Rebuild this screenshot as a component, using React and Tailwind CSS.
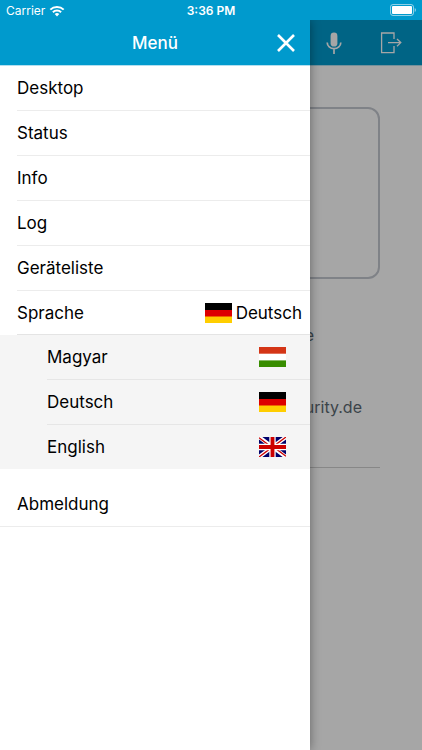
import React, { useState } from 'react';

const menuItems = ['Desktop', 'Status', 'Info', 'Log', 'Geräteliste'];

const GermanFlag = () => (
  <svg className="w-[27px] h-5" viewBox="0 0 28 20" preserveAspectRatio="none" aria-hidden="true">
    <path d="M0 0h28v7H0z" fill="#000" />
    <path d="M0 7h28v7H0z" fill="#dd0000" />
    <path d="M0 13.5h28V20H0z" fill="#ffce00" />
  </svg>
);

const HungarianFlag = () => (
  <svg className="w-[27px] h-5" viewBox="0 0 28 20" preserveAspectRatio="none" aria-hidden="true">
    <path d="M0 0h28v20H0z" fill="#fff" />
    <path d="M0 0h28v6.7H0z" fill="#d43516" />
    <path d="M0 13.4h28V20H0z" fill="#388d00" />
  </svg>
);

const BritishFlag = () => (
  <svg className="w-[27px] h-5" viewBox="0 0 28 20" preserveAspectRatio="none" aria-hidden="true">
    <path d="M0 0h28v20H0z" fill="#00006b" />
    <path d="M0 0L28 20M28 0L0 20" stroke="#fff" strokeWidth="4" />
    <path d="M0 .8L12 9.4M28 0L16 8.6M0 20l12-8.6M28 19.2l-12-8.6" stroke="#cc0000" strokeWidth="1.3" />
    <path d="M14 0v20M0 10h28" stroke="#fff" strokeWidth="6.6" />
    <path d="M14 0v20M0 10h28" stroke="#cc0000" strokeWidth="4" />
  </svg>
);

const languages = [
  { name: 'Magyar', Flag: HungarianFlag },
  { name: 'Deutsch', Flag: GermanFlag },
  { name: 'English', Flag: BritishFlag },
];

const StatusBar = () => (
  <div className="h-5 px-1.5 grid grid-cols-3 items-center bg-[#009acd] text-white text-xs">
    <div className="flex items-center gap-1 pt-0.5">
      <span>Carrier</span>
      <svg className="w-4 h-3" viewBox="0 0 16 12" fill="none" stroke="#fff" strokeWidth="2" aria-hidden="true">
        <path d="M1.3 4.6a9.6 9.6 0 0 1 13.4 0M3.9 7.2a5.9 5.9 0 0 1 8.2 0" />
        <path d="M8 11.4L5.7 9.1a3.3 3.3 0 0 1 4.6 0z" fill="#fff" stroke="none" />
      </svg>
    </div>
    <div className="pt-0.5 text-center font-semibold">3:36 PM</div>
    <div className="flex justify-end">
      <svg className="w-[26px] h-3" viewBox="0 0 26 12" aria-hidden="true">
        <rect x=".5" y=".5" width="23" height="11" rx="2.5" fill="none" stroke="#fff" strokeOpacity=".55" />
        <rect x="2" y="2" width="20" height="8" rx="1" fill="#fff" />
        <path d="M24.7 4a2.2 2.2 0 0 1 0 4z" fill="#fff" fillOpacity=".55" />
      </svg>
    </div>
  </div>
);

// Page that stays visible next to the opened drawer
const Desktop = () => (
  <div className="flex-1 flex flex-col bg-white text-[#5c6972]">
    <header className="h-[46px] shrink-0 pr-5 flex items-center justify-end gap-[38px] bg-[#009acd] border-b border-[#b2dff0] text-white">
      <button type="button" aria-label="Mikrofon">
        <svg className="w-4 h-[22px]" viewBox="0 0 16 22" fill="none" stroke="currentColor" strokeWidth="1.7">
          <rect x="4.6" y=".6" width="6.8" height="14" rx="3.4" fill="currentColor" stroke="none" />
          <path d="M1.2 10.5a6.8 6.2 0 0 0 13.6 0M8 16.8V22" />
        </svg>
      </button>
      <button type="button" aria-label="Ausgang">
        <svg className="w-[22px] h-[22px]" viewBox="0 0 22 22" fill="none" stroke="currentColor" strokeWidth="1.3">
          <path d="M14 7V1H1.6v19.6H14V14" />
          <path d="M8 10.6h12.6M17 7l3.8 3.6L17 14.2" />
        </svg>
      </button>
    </header>
    <main className="px-[42px] pt-[41px] text-base leading-6">
      <div className="h-[172px] rounded-xl border-2 border-[#c4c8d0]"></div>
      <p className="mt-11 pr-[66px] text-right">e</p>
      <p className="mt-12 pr-[18px] text-right">urity.de</p>
      <hr className="mt-12 border-[#cfcfcf]" />
    </main>
  </div>
);

const App = () => {
  const [menuOpen, setMenuOpen] = useState(true);
  const [language, setLanguage] = useState('Deutsch');
  const CurrentFlag = languages.find((l) => l.name === language).Flag;

  return (
    <div className="min-h-screen flex flex-col font-['Inter',sans-serif]">
      <StatusBar />
      <div className="relative flex-1 flex flex-col">
        <Desktop />

        {menuOpen && (
          <div className="absolute inset-0 bg-black/35">
            <aside className="w-[calc(100%-112px)] h-full bg-white text-black text-[17px] leading-6 shadow-[0_0_10px_rgba(0,0,0,0.4)] [clip-path:inset(0_-12px_0_0)]">
              {/* Drawer header */}
              <header className="h-[46px] px-3 grid grid-cols-[1fr_auto_1fr] items-center bg-[#009acd] border-b border-[#b2dff0] text-white">
                <h1 className="col-start-2 font-medium">Menü</h1>
                <button
                  type="button"
                  aria-label="Schließen"
                  className="justify-self-end"
                  onClick={() => setMenuOpen(false)}
                >
                  <svg className="w-6 h-6" viewBox="0 0 24 24" stroke="currentColor" strokeWidth="2.6">
                    <path d="M4 4l16 16M20 4L4 20" />
                  </svg>
                </button>
              </header>

              <nav>
                <ul>
                  {menuItems.map((item) => (
                    <li key={item} className="pl-[17px]">
                      <button type="button" className="w-full h-[45px] border-b border-[#ececec] text-left">
                        {item}
                      </button>
                    </li>
                  ))}
                  <li className="pl-[17px]">
                    <button
                      type="button"
                      className="w-full h-11 pr-2 flex items-center justify-between border-b border-[#e4e4e4]"
                    >
                      <span>Sprache</span>
                      <span className="flex items-center gap-1">
                        <CurrentFlag />
                        {language}
                      </span>
                    </button>
                  </li>
                </ul>

                {/* Languages */}
                <ul className="pl-[47px] bg-[#f5f5f5] divide-y divide-[#e6e6e6]">
                  {languages.map(({ name, Flag }) => (
                    <li key={name}>
                      <button
                        type="button"
                        className="w-full h-11 pr-6 flex items-center justify-between"
                        onClick={() => setLanguage(name)}
                      >
                        {name}
                        <Flag />
                      </button>
                    </li>
                  ))}
                </ul>

                <button type="button" className="w-full h-[58px] pt-3 px-[17px] border-b border-[#ececec] text-left">
                  Abmeldung
                </button>
              </nav>
            </aside>
          </div>
        )}
      </div>
    </div>
  );
};

export default App;
